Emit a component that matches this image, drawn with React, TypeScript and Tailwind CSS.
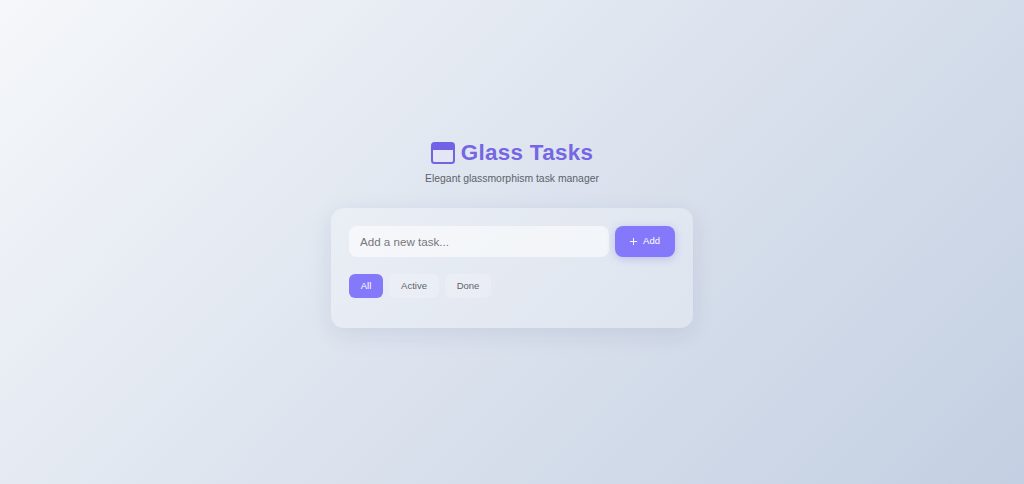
import { Plus } from "lucide-react";

export default function App() {
  return (
    <div className="h-[484px] w-full overflow-hidden bg-[linear-gradient(135deg,#f5f7fa_0%,#c3cfe2_100%)] font-['Liberation_Sans',sans-serif] flex flex-col items-center pt-[140px]">
      <div className="flex items-center justify-center gap-[6px] h-[25px] text-[#6c5ce7]">
        <svg width="24" height="22" viewBox="0 0 24 22" className="shrink-0">
          <rect x="1" y="1" width="22" height="20" rx="2.5" fill="#e4e6f6" stroke="#7263e6" strokeWidth="2" />
          <path d="M1 3.5A2.5 2.5 0 0 1 3.5 1h17A2.5 2.5 0 0 1 23 3.5V8H1z" fill="#7263e6" />
        </svg>
        <h1 className="text-[22.4px] tracking-[0.3px] leading-[25px] font-bold text-[#7566e4]">Glass Tasks</h1>
      </div>
      <p className="mt-[6px] text-[10.4px] leading-[16px] text-[#5c626c]">Elegant glassmorphism task manager</p>
      <div className="mt-[21px] w-[362px] h-[120px] rounded-[13px] bg-white/25 shadow-[0_6px_24px_rgba(31,38,100,0.09)] p-[18px]">
        <div className="flex gap-[6px]">
          <input
            placeholder="Add a new task..."
            className="w-[260px] h-[31px] rounded-[8px] bg-white/55 px-[11px] text-[11.6px] outline-none placeholder:text-[#75777d]"
          />
          <button className="w-[60px] h-[31px] pr-[2px] rounded-[8px] bg-[#8579fb] text-white text-[9.5px] font-medium flex items-center justify-center gap-[4px] shadow-[0_2px_8px_rgba(108,92,231,0.3)]">
            <Plus className="w-[11px] h-[11px]" strokeWidth={2} />
            Add
          </button>
        </div>
        <div className="mt-[17px] flex gap-[6px] text-[9.5px]">
          <button className="w-[34px] h-[24px] rounded-[6px] bg-[#8579fb] text-white">All</button>
          <button className="w-[50px] h-[24px] rounded-[6px] bg-white/20 text-[#5c626c]">Active</button>
          <button className="w-[46px] h-[24px] rounded-[6px] bg-white/20 text-[#5c626c]">Done</button>
        </div>
      </div>
    </div>
  );
}
